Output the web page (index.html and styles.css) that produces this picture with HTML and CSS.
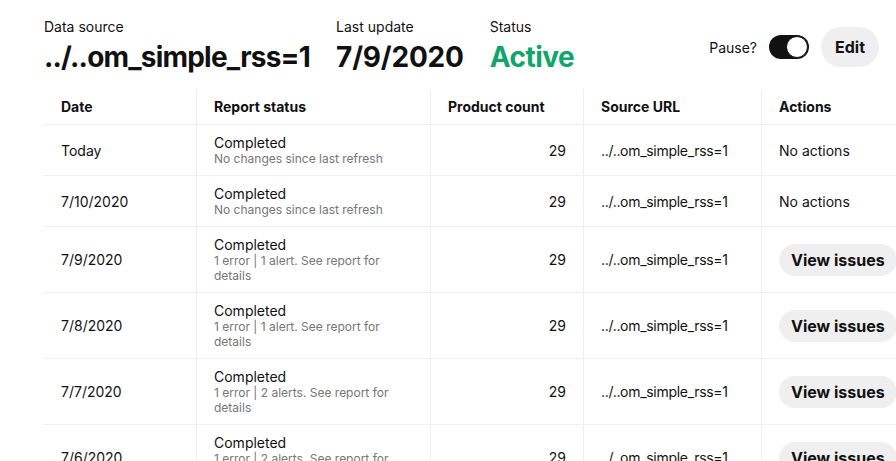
FILE: index.html
```html
<!DOCTYPE html>
<html lang="en">
<head>
<meta charset="utf-8">
<title>Data source</title>
<link rel="stylesheet" href="styles.css">
</head>
<body>
<div class="page">
  <header class="summary">
    <div class="stat">
      <div class="stat-label">Data source</div>
      <div class="stat-value stat-value--tight">../..om_simple_rss=1</div>
    </div>
    <div class="stat">
      <div class="stat-label">Last update</div>
      <div class="stat-value">7/9/2020</div>
    </div>
    <div class="stat">
      <div class="stat-label">Status</div>
      <div class="stat-value stat-value--active">Active</div>
    </div>
    <div class="controls">
      <span class="pause-label">Pause?</span>
      <span class="switch" role="switch" aria-checked="true"><span class="switch-knob"></span></span>
      <button class="pill pill--lg" type="button">Edit</button>
    </div>
  </header>

  <table class="reports">
    <colgroup>
      <col class="c-date">
      <col class="c-status">
      <col class="c-count">
      <col class="c-url">
      <col class="c-actions">
    </colgroup>
    <thead>
      <tr>
        <th>Date</th>
        <th>Report status</th>
        <th>Product count</th>
        <th>Source URL</th>
        <th>Actions</th>
      </tr>
    </thead>
    <tbody>
      <tr>
        <td>Today</td>
        <td><div class="status">Completed</div><div class="sub">No changes since last refresh</div></td>
        <td class="num">29</td>
        <td class="url">../..om_simple_rss=1</td>
        <td>No actions</td>
      </tr>
      <tr>
        <td>7/10/2020</td>
        <td><div class="status">Completed</div><div class="sub">No changes since last refresh</div></td>
        <td class="num">29</td>
        <td class="url">../..om_simple_rss=1</td>
        <td>No actions</td>
      </tr>
      <tr>
        <td>7/9/2020</td>
        <td><div class="status">Completed</div><div class="sub">1 error | 1 alert. See report for details</div></td>
        <td class="num">29</td>
        <td class="url">../..om_simple_rss=1</td>
        <td><button class="pill" type="button">View issues</button></td>
      </tr>
      <tr>
        <td>7/8/2020</td>
        <td><div class="status">Completed</div><div class="sub">1 error | 1 alert. See report for details</div></td>
        <td class="num">29</td>
        <td class="url">../..om_simple_rss=1</td>
        <td><button class="pill" type="button">View issues</button></td>
      </tr>
      <tr>
        <td>7/7/2020</td>
        <td><div class="status">Completed</div><div class="sub">1 error | 2 alerts. See report for details</div></td>
        <td class="num">29</td>
        <td class="url">../..om_simple_rss=1</td>
        <td><button class="pill" type="button">View issues</button></td>
      </tr>
      <tr>
        <td>7/6/2020</td>
        <td><div class="status">Completed</div><div class="sub">1 error | 2 alerts. See report for details</div></td>
        <td class="num">29</td>
        <td class="url">../..om_simple_rss=1</td>
        <td><button class="pill" type="button">View issues</button></td>
      </tr>
    </tbody>
  </table>
</div>
</body>
</html>
```

FILE: styles.css
```css
* { box-sizing: border-box; }

html, body {
  margin: 0;
  padding: 0;
  background: #ffffff;
  overflow: hidden;
}

body {
  font-family: Inter, "Liberation Sans", Arial, sans-serif;
  color: #111111;
  font-size: 14px;
  line-height: 17px;
}

.page {
  padding: 18px 17px 0 44px;
  width: 960px;
}

.summary {
  display: flex;
  align-items: center;
  gap: 26px;
  width: 835px;
}

.stat-label {
  font-size: 14px;
  line-height: 17px;
  margin-bottom: 5px;
}

.stat-value {
  font-size: 28px;
  line-height: 34px;
  font-weight: 700;
  letter-spacing: -0.2px;
}

.stat-value--tight {
  letter-spacing: -0.8px;
}

.stat-value--active {
  color: #10a56b;
  letter-spacing: -0.5px;
}

.controls {
  margin-left: auto;
  display: flex;
  align-items: center;
  gap: 12px;
  padding-top: 2px;
}

.pause-label {
  font-size: 14px;
}

.switch {
  display: flex;
  justify-content: flex-end;
  align-items: center;
  width: 40px;
  height: 24px;
  border-radius: 12px;
  background: #111111;
  padding: 1px;
}

.switch-knob {
  width: 22px;
  height: 22px;
  border-radius: 50%;
  background: #ffffff;
  border: 1.5px solid #111111;
}

.pill {
  font-family: inherit;
  font-weight: 700;
  font-size: 16px;
  line-height: 20px;
  color: #111111;
  background: #efefef;
  border: 0;
  border-radius: 16px;
  height: 32px;
  padding: 0 12px;
  white-space: nowrap;
}

.pill--lg {
  height: 40px;
  border-radius: 20px;
  padding: 0 14px;
}

.reports {
  margin-top: 15px;
  border-collapse: separate;
  border-spacing: 0;
  table-layout: fixed;
  width: 867px;
}

.c-date { width: 152px; }
.c-status { width: 234px; }
.c-count { width: 153px; }
.c-url { width: 178px; }
.c-actions { width: 150px; }

.reports th,
.reports td {
  padding: 9px 17px;
  border-bottom: 1px solid #efefef;
  text-align: left;
  vertical-align: middle;
  font-size: 14px;
  line-height: 17px;
}

.reports th + th,
.reports td + td {
  border-left: 1px solid #efefef;
}

.reports th {
  font-weight: 700;
}

.reports td.num {
  text-align: right;
}

.reports td.url {
  letter-spacing: -0.3px;
}

.status {
  font-size: 14px;
  line-height: 17px;
}

.sub {
  font-size: 12px;
  line-height: 15px;
  color: #767676;
}
```
